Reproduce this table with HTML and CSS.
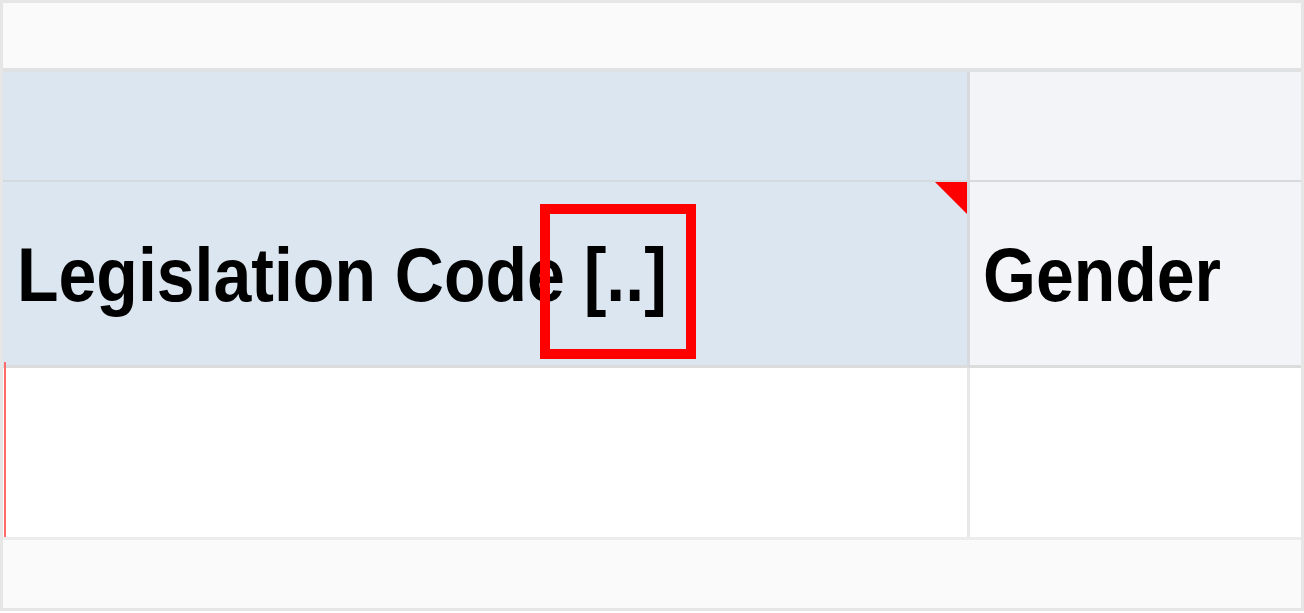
FILE: index.html
```html
<!DOCTYPE html>
<html>
<head>
<link rel="stylesheet" href="styles.css">
</head>
<body>
<div class="frame">
  <div class="band band-top"></div>
  <div class="grid">
    <div class="cell head-key group"></div>
    <div class="cell head-plain group"></div>
    <div class="cell head-key title">
      <span class="label">Legislation Code [..]</span>
      <span class="flag"></span>
      <span class="marker"></span>
    </div>
    <div class="cell head-plain title"><span class="label">Gender</span></div>
    <div class="cell body-cell key-col required"></div>
    <div class="cell body-cell"></div>
  </div>
  <div class="band band-bottom"></div>
</div>
</body>
</html>
```

FILE: styles.css
```css
* {
  box-sizing: border-box;
}

body {
  margin: 0;
  font-family: "Liberation Sans", Arial, sans-serif;
  background: #ffffff;
}

.frame {
  width: 1304px;
  height: 611px;
  border: 3px solid #e6e6e6;
  display: flex;
  flex-direction: column;
}

.band {
  background-color: #fafafa;
}

.band-top {
  height: 69px;
  border-bottom: 4px solid #dfe1e3;
}

.band-bottom {
  flex: 1;
  border-top: 3px solid #ececec;
}

.grid {
  display: grid;
  grid-template-columns: 967px 1fr;
  grid-template-rows: 110px 186px 169px;
}

.cell {
  position: relative;
}

.head-key {
  background-color: #dce6f0;
  border-right: 3px solid #d6dadf;
}

.head-plain {
  background-color: #f2f4f8;
}

.group {
  border-bottom: 2px solid #d5dade;
}

.title {
  display: flex;
  align-items: center;
  padding: 0 0 0 14px;
  border-bottom: 3px solid #dcdcdc;
}

.head-plain.title {
  padding-left: 13px;
}

.label {
  display: inline-block;
  font-size: 68px;
  font-weight: bold;
  color: #000000;
  white-space: nowrap;
  transform: scaleY(1.11);
  transform-origin: left center;
}

.flag {
  position: absolute;
  top: 0;
  right: 0;
  width: 0;
  height: 0;
  border-top: 32px solid #ff0000;
  border-left: 32px solid transparent;
}

.marker {
  position: absolute;
  left: 537px;
  top: 22px;
  width: 156px;
  height: 155px;
  border: 10px solid #ff0000;
}

.body-cell {
  background-color: #ffffff;
}

.key-col {
  border-right: 3px solid #e8e8e8;
}

.required::before {
  content: "";
  position: absolute;
  left: 1px;
  top: -6px;
  bottom: 0;
  width: 2px;
  background-color: #ff6b6b;
}
```
